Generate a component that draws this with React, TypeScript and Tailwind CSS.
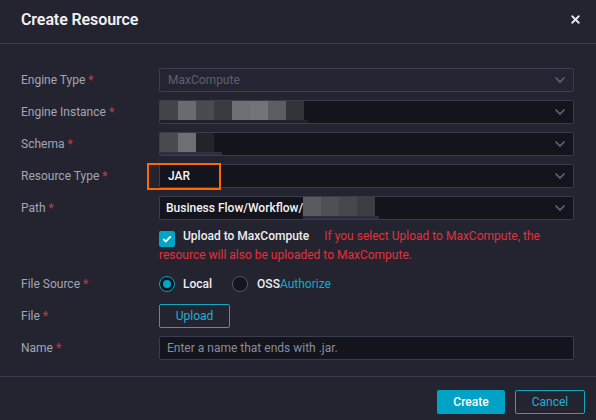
import { X } from "lucide-react";

const fieldText = "text-[12px] leading-[17px]";

const Chevron = () => (
  <svg width="12" height="8" viewBox="0 0 12 8" className="shrink-0">
    <path d="M1.5 1.5 L6 6 L10.5 1.5" fill="none" stroke="#60627a" strokeWidth="1.6" />
  </svg>
);

const Label = ({ text }: { text: string }) => (
  <div className={`w-[138px] shrink-0 text-[#a3a5b5] ${fieldText}`}>
    {text} <span className="text-[#e0303c]">*</span>
  </div>
);

const Blur = ({ colors, strip, stripWidth }: { colors: string[]; strip: string; stripWidth: number }) => (
  <div className="flex flex-col self-start">
    <div className="flex h-[19px]">
      {colors.map((c, i) => (
        <div key={i} className="h-full w-[18px]" style={{ background: c }} />
      ))}
    </div>
    <div className="h-[4px]" style={{ background: strip, width: stripWidth }} />
  </div>
);

const Select = ({ children, disabled }: { children?: React.ReactNode; disabled?: boolean }) => (
  <div
    className={`flex h-[24px] flex-1 items-center justify-between rounded-[2px] border border-[#3a3c50] pr-[7px] ${
      disabled ? "bg-[#242533]" : "bg-[#13141c]"
    }`}
  >
    <div className="flex h-full items-center overflow-hidden">{children}</div>
    <Chevron />
  </div>
);

const Row = ({ label, children }: { label: string; children: React.ReactNode }) => (
  <div className="flex h-[24px] items-center">
    <Label text={label} />
    {children}
  </div>
);

export default function App() {
  return (
    <div
      className="flex h-[420px] w-[596px] flex-col bg-[#23242f] text-white"
      style={{ fontFamily: "Roboto, 'Liberation Sans', sans-serif" }}
    >
      <div className="flex h-[44px] shrink-0 items-center justify-between border-b border-[#3b3d4e] pl-[21px] pr-[14px]">
        <div className="mt-[-3px] text-[16px] font-semibold tracking-[-0.1px] text-[#f0f0f5]">Create Resource</div>
        <X size={13} strokeWidth={3.4} className="mt-[-5px] text-[#e8e8f0]" />
      </div>

      <div className="flex flex-col gap-[8px] border-b border-[#3b3d4e] px-[21px] pb-[16px] pt-[24px] pr-[22px]">
        <Row label="Engine Type">
          <Select disabled>
            <span className={`pl-[8px] text-[#5e6072] ${fieldText}`}>MaxCompute</span>
          </Select>
        </Row>
        <Row label="Engine Instance">
          <Select>
            <Blur
              colors={["#434447", "#6a6b6f", "#4a4b4e", "#3a3b40", "#6e6f72", "#727377", "#5c5d60", "#323437"]}
              strip="#20212b"
              stripWidth={148}
            />
          </Select>
        </Row>
        <Row label="Schema">
          <Select>
            <Blur colors={["#4a4b4f", "#6e6f73", "#222427"]} strip="#2d2f42" stripWidth={62} />
          </Select>
        </Row>
        <Row label="Resource Type">
          <div className="relative flex flex-1">
            <div className="pointer-events-none absolute left-[-12px] top-[-1px] h-[27px] w-[74px] border-2 border-[#ff6a00]" />
            <Select>
              <span className={`pl-[8px] font-medium text-[#f2f2f6] ${fieldText}`}>JAR</span>
            </Select>
          </div>
        </Row>
        <Row label="Path">
          <Select>
            <span className={`pl-[6px] font-medium text-[#f2f2f6] ${fieldText}`}>Business Flow/Workflow/</span>
            <Blur colors={["#5a5b5e", "#4f5053", "#47484c", "#3d3e42"]} strip="#2d2f40" stripWidth={76} />
          </Select>
        </Row>

        <div className="flex">
          <div className="w-[138px] shrink-0" />
          <p className={`flex-1 ${fieldText} text-[#e0323e]`}>
            <span className="mr-[8px] inline-flex h-[16px] w-[16px] items-center justify-center rounded-[2px] bg-[#00a4c6] align-[-3px]">
              <svg width="10" height="8" viewBox="0 0 10 8">
                <path d="M1.2 4 L3.8 6.4 L8.8 1.4" fill="none" stroke="white" strokeWidth="1.8" />
              </svg>
            </span>
            <span className="mr-[15px] font-medium text-[#eeeef3]">Upload to MaxCompute</span>
            If you select Upload to MaxCompute, the resource will also be uploaded to MaxCompute.
          </p>
        </div>

        <Row label="File Source">
          <div className={`flex items-center ${fieldText}`}>
            <span className="flex h-[16px] w-[16px] shrink-0 items-center justify-center rounded-full border border-[#00a4c6] bg-[#13141c]">
              <span className="h-[8px] w-[8px] rounded-full bg-[#00a4c6]" />
            </span>
            <span className="ml-[8px] font-medium text-[#eeeef3]">Local</span>
            <span className="ml-[20px] h-[16px] w-[16px] shrink-0 rounded-full border border-[#55576a] bg-[#13141c]" />
            <span className="ml-[9px] font-medium text-[#eeeef3]">OSS</span>
            <span className="text-[#16a8c8]">Authorize</span>
          </div>
        </Row>
        <Row label="File">
          <div
            className={`flex h-[24px] w-[71px] items-center justify-center rounded-[2px] border border-[#13a7c6] text-[#22b0d0] ${fieldText}`}
          >
            Upload
          </div>
        </Row>
        <Row label="Name">
          <div className="flex h-[24px] flex-1 items-center rounded-[2px] border border-[#3a3c50] bg-[#13141c] pl-[7px]">
            <span className={`text-[#8a8c9c] ${fieldText}`}>Enter a name that ends with .jar.</span>
          </div>
        </Row>
      </div>

      <div className={`flex justify-end gap-[10px] pr-[11px] pt-[13px] ${fieldText}`}>
        <div className="flex h-[24px] w-[68px] items-center justify-center rounded-[2px] bg-[#00a3c5] font-medium text-white">
          Create
        </div>
        <div className="flex h-[24px] w-[70px] items-center justify-center rounded-[2px] border border-[#13a7c6] text-[#22b0d0]">
          Cancel
        </div>
      </div>
    </div>
  );
}
